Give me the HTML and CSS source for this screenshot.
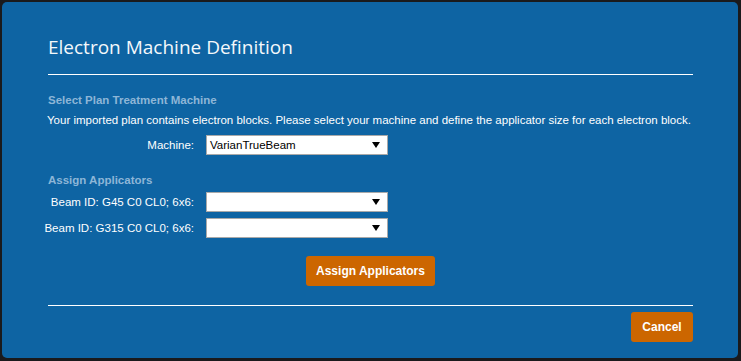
FILE: index.html
```html
<!DOCTYPE html>
<html>
<head>
<meta charset="utf-8">
<link rel="stylesheet" href="styles.css">
</head>
<body>
<div class="dialog">
  <div class="header">
    <h1 class="title">Electron Machine Definition</h1>
  </div>
  <div class="content">
    <h2 class="section-title">Select Plan Treatment Machine</h2>
    <p class="intro">Your imported plan contains electron blocks. Please select your machine and define the applicator size for each electron block.</p>
    <div class="form-grid machine-grid">
      <label class="field-label">Machine:</label>
      <div class="select"><span class="select-value">VarianTrueBeam</span><svg class="caret" width="8" height="6" viewBox="0 0 8 6"><path d="M0 0H8L4 6Z" fill="#000"/></svg></div>
    </div>
    <h2 class="section-title applicators-title">Assign Applicators</h2>
    <div class="form-grid beams-grid">
      <label class="field-label">Beam ID: G45 C0 CL0; 6x6:</label>
      <div class="select"><span class="select-value"></span><svg class="caret" width="8" height="6" viewBox="0 0 8 6"><path d="M0 0H8L4 6Z" fill="#000"/></svg></div>
      <label class="field-label">Beam ID: G315 C0 CL0; 6x6:</label>
      <div class="select"><span class="select-value"></span><svg class="caret" width="8" height="6" viewBox="0 0 8 6"><path d="M0 0H8L4 6Z" fill="#000"/></svg></div>
    </div>
    <div class="assign-row">
      <button class="btn btn-assign">Assign Applicators</button>
    </div>
  </div>
  <div class="footer">
    <button class="btn btn-cancel">Cancel</button>
  </div>
</div>
</body>
</html>
```

FILE: styles.css
```css
html, body {
  margin: 0;
  padding: 0;
  background: #1a1a1c;
  width: 741px;
  height: 361px;
  overflow: hidden;
}

.dialog {
  box-sizing: border-box;
  margin: 2px 0 0 2px;
  width: 736px;
  height: 356px;
  background: #0e64a3;
  border-radius: 5px;
  padding: 0 45px 0 46px;
  display: flex;
  flex-direction: column;
  font-family: "Liberation Sans", Arial, sans-serif;
  font-size: 11.5px;
  color: #ffffff;
}

.header {
  padding-top: 32px;
  padding-bottom: 14px;
  border-bottom: 1px solid #ffffff;
}

.title {
  margin: 0;
  font-family: "Open Sans", "Noto Sans", sans-serif;
  font-weight: 400;
  font-size: 19px;
  line-height: 26px;
  color: #f4f8fb;
}

.content {
  padding-top: 18px;
  display: flex;
  flex-direction: column;
}

.section-title {
  margin: 0;
  font-size: 11.5px;
  line-height: 14px;
  font-weight: 700;
  color: #8db6d7;
}

.intro {
  margin: 6px 0 0 -1px;
  line-height: 14px;
  white-space: nowrap;
}

.form-grid {
  display: grid;
  grid-template-columns: 150px 182px;
  column-gap: 12px;
  row-gap: 6px;
  align-items: center;
  margin-left: -4px;
}

.machine-grid {
  margin-top: 8px;
}

.beams-grid {
  margin-top: 5px;
}

.applicators-title {
  margin-top: 18px;
}

.field-label {
  text-align: right;
  white-space: nowrap;
  line-height: 14px;
}

.select {
  box-sizing: border-box;
  height: 20px;
  background: #ffffff;
  border: 1px solid #a9a9a9;
  display: flex;
  align-items: center;
  justify-content: space-between;
  padding: 0 7px 0 3px;
  color: #000;
}

.select-value {
  line-height: 14px;
}

.caret {
  display: block;
}

.assign-row {
  display: flex;
  justify-content: center;
  margin-top: 18px;
}

.btn {
  border: none;
  border-radius: 3px;
  background: #cc6600;
  color: #ffffff;
  font-family: "Liberation Sans", Arial, sans-serif;
  font-weight: 700;
  font-size: 12px;
  height: 30px;
  padding: 0;
  cursor: pointer;
}

.btn-assign {
  width: 129px;
}

.footer {
  margin-top: auto;
  border-top: 1px solid #ffffff;
  padding: 6px 0 16px;
  display: flex;
  justify-content: flex-end;
}

.btn-cancel {
  width: 62px;
}
```
